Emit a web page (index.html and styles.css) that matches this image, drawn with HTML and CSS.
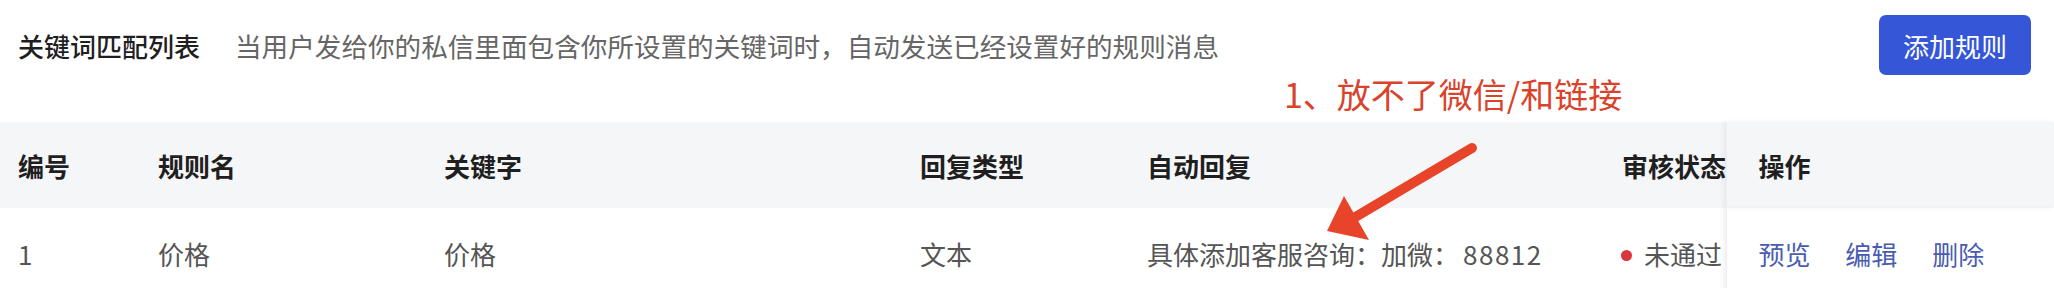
FILE: index.html
```html
<!DOCTYPE html>
<html lang="zh-CN">
<head>
    <meta charset="UTF-8">
    <title>关键词匹配列表</title>
    <link rel="stylesheet" href="styles.css">
</head>
<body>

    <div class="page">
        <div class="toolbar">
            <h1 class="title">关键词匹配列表</h1>
            <span class="desc">当用户发给你的私信里面包含你所设置的关键词时，自动发送已经设置好的规则消息</span>
            <button class="btn-primary">添加规则</button>
        </div>

        <table class="rules">
            <thead>
                <tr>
                    <th class="col-id">编号</th>
                    <th class="col-name">规则名</th>
                    <th class="col-key">关键字</th>
                    <th class="col-type">回复类型</th>
                    <th class="col-reply">自动回复</th>
                    <th class="col-status">审核状态</th>
                    <th class="col-ops">操作</th>
                </tr>
            </thead>
            <tbody>
                <tr>
                    <td>1</td>
                    <td>价格</td>
                    <td>价格</td>
                    <td>文本</td>
                    <td>具体添加客服咨询：加微：<span class="num">88812</span></td>
                    <td><span class="dot"></span>未通过</td>
                    <td class="col-ops">
                        <a href="#preview">预览</a>
                        <a href="#edit">编辑</a>
                        <a href="#delete">删除</a>
                    </td>
                </tr>
            </tbody>
        </table>

        <!-- annotation drawn over the screenshot -->
        <div class="note">1、放不了微信/和链接</div>
        <svg class="arrow" width="2054" height="288" viewBox="0 0 2054 288">
            <path d="M1472 148 L1352 219" stroke="#e8442a" stroke-width="10" stroke-linecap="round" fill="none"/>
            <polygon points="1327,231 1344,196 1369,240" fill="#e8442a"/>
        </svg>
    </div>

</body>
</html>
```

FILE: styles.css
```css
body {
    margin: 0;
    padding: 0;
    background: #fff;
    font-family: "Noto Sans CJK SC", "Noto Sans", sans-serif;
    color: #333;
}
.page {
    position: relative;
    width: 2054px;
    height: 288px;
    overflow: hidden;
}
.toolbar {
    display: flex;
    align-items: center;
    height: 90px;
    padding: 0 23px 0 18px;
    margin-bottom: 32px;
}
.title {
    margin: 0;
    font-size: 26px;
    font-weight: 500;
    color: #1f1f1f;
}
.desc {
    margin-left: 35px;
    font-size: 26.6px;
    color: #666;
}
.btn-primary {
    margin-left: auto;
    width: 152px;
    height: 60px;
    border: none;
    border-radius: 7px;
    background: #3656d8;
    color: #fff;
    font-family: inherit;
    font-size: 26px;
}

/* table */
.rules {
    width: 2054px;
    border-collapse: collapse;
    table-layout: fixed;
}
.rules th,
.rules td {
    box-sizing: border-box;
    padding: 0 0 0 18px;
    text-align: left;
    font-size: 26px;
    white-space: nowrap;
}
.rules th {
    height: 86px;
    background: #f5f6f8;
    color: #1f1f1f;
    font-weight: 700;
}
.rules td {
    height: 90px;
    color: #555;
}
.num {
    letter-spacing: 1.5px;
    margin-left: 4px;
}
.col-id { width: 140px; }
.col-name { width: 286px; }
.col-key { width: 476px; }
.col-type { width: 227px; }
.col-reply { width: 475px; }
.col-status { width: 122px; }
.col-ops { width: 328px; }
.rules .col-ops {
    padding-left: 32px;
    box-shadow: -3px 0 5px rgba(0, 0, 0, 0.05);
    border-left: 1px solid #eceef2;
}
.dot {
    display: inline-block;
    width: 11px;
    height: 11px;
    margin: 0 12px 0 -1px;
    border-radius: 50%;
    background: #d9363e;
    vertical-align: middle;
    position: relative;
    top: -2px;
}
.col-ops a {
    color: #4a5cb2;
    text-decoration: none;
    margin-right: 29px;
}

/* annotation */
.note {
    position: absolute;
    left: 1284px;
    top: 69px;
    font-size: 34px;
    color: #d9432b;
    white-space: nowrap;
}
.arrow {
    position: absolute;
    left: 0;
    top: 0;
    pointer-events: none;
}
```
